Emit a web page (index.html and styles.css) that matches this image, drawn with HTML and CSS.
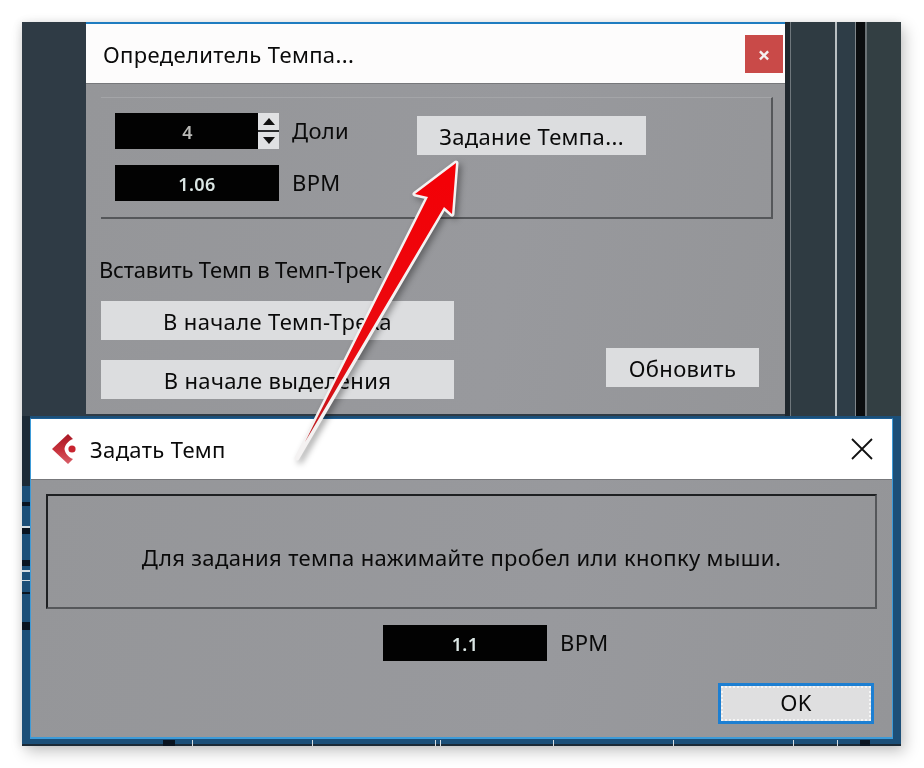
FILE: index.html
```html
<!DOCTYPE html>
<html lang="ru">
<head>
  <meta charset="UTF-8">
  <meta name="viewport" content="width=device-width, initial-scale=1.0">
  <title>Определитель Темпа</title>
  <link rel="stylesheet" href="styles.css">
</head>
<body>
  <div class="daw">
    <!-- Tap tempo window -->
    <section class="window window-tempo">
      <header class="titlebar">
        <span class="title">Определитель Темпа...</span>
        <button class="close-red" aria-label="Закрыть">×</button>
      </header>
      <div class="window-body">
        <div class="group">
          <div class="fields">
            <div class="field-row">
              <div class="display spin">
                <span class="value dim">4</span>
                <div class="spinner">
                  <span class="spin-btn"><i class="tri up"></i></span>
                  <span class="spin-btn"><i class="tri down"></i></span>
                </div>
              </div>
              <span class="label">Доли</span>
            </div>
            <div class="field-row">
              <div class="display"><span class="value">1.06</span></div>
              <span class="label">BPM</span>
            </div>
          </div>
          <button class="btn btn-tap">Задание Темпа...</button>
        </div>
        <p class="insert-label">Вставить Темп в Темп-Трек</p>
        <div class="insert-row">
          <div class="insert-buttons">
            <button class="btn btn-wide">В начале Темп-Трека</button>
            <button class="btn btn-wide">В начале выделения</button>
          </div>
          <button class="btn btn-refresh">Обновить</button>
        </div>
      </div>
    </section>

    <!-- Set tempo window -->
    <section class="window window-set">
      <header class="titlebar titlebar-set">
        <svg class="app-logo" viewBox="0 0 26 32" width="26" height="32">
          <defs>
            <linearGradient id="logoFill" x1="0" y1="0" x2="0" y2="1">
              <stop offset="0" stop-color="#a81825"/>
              <stop offset="0.55" stop-color="#c8323c"/>
              <stop offset="1" stop-color="#d8606a"/>
            </linearGradient>
          </defs>
          <path fill="url(#logoFill)" d="M17 1 L1 16 L17 31 L22 26 C17 24 14 20 13.5 16 C14 12 17 8 22 6 Z"/>
          <circle class="logo-dot" cx="21" cy="16" r="3.6"/>
        </svg>
        <span class="title title-set">Задать Темп</span>
        <svg class="close-x" viewBox="0 0 22 22" width="22" height="22">
          <path d="M1 1 L21 21 M21 1 L1 21"/>
        </svg>
      </header>
      <div class="window-body body-set">
        <div class="message">Для задания темпа нажимайте пробел или кнопку мыши.</div>
        <div class="field-row field-center">
          <div class="display"><span class="value">1.1</span></div>
          <span class="label">BPM</span>
        </div>
        <div class="actions">
          <button class="btn btn-ok"><span class="focus">OK</span></button>
        </div>
      </div>
    </section>
  </div>

  <!-- Callout arrow over both windows -->
  <svg class="arrow" viewBox="0 0 924 768" width="924" height="768">
    <defs>
      <linearGradient id="arrowFill" x1="0" y1="0" x2="0" y2="1">
        <stop offset="0" stop-color="#f40006"/>
        <stop offset="0.7" stop-color="#ea0a10"/>
        <stop offset="1" stop-color="#b81c20"/>
      </linearGradient>
    </defs>
    <polygon class="arrow-edge" points="456,163 415,194 428,197 297,458 444,207 452,214"/>
    <polygon fill="url(#arrowFill)" points="456,163 415,194 428,197 305,442 444,207 452,214"/>
  </svg>
</body>
</html>
```

FILE: styles.css
```css
/* Page and the dark DAW backdrop */
html, body {
  margin: 0;
  padding: 0;
  background: #fff;
}
body {
  position: relative;
  width: 924px;
  height: 768px;
  overflow: hidden;
  font-family: "Noto Sans", "Open Sans", sans-serif;
  letter-spacing: 0.35px;
  color: #0a0a0a;
  filter: blur(0.35px);
}
.daw {
  position: relative;
  width: 879px;
  height: 724px;
  margin: 22px 0 0 22px;
  background:
    linear-gradient(90deg,
      transparent 763px, #1f272d 763px, #1f272d 768px, #6f777c 768px, #6f777c 769px,
      #2f3b42 769px, #2f3b42 813px, #b9bfc2 813px, #b9bfc2 815px,
      #2e3d47 815px, #2e3d47 833px, #7f868a 833px, #7f868a 834px,
      #0b0d0f 834px, #0b0d0f 843px, #6b7276 843px, #6b7276 845px,
      #333f43 845px) top / 100% 400px no-repeat,
    #2f3b45;
  box-shadow: 4px 6px 14px rgba(0, 0, 0, 0.22), -2px 0 8px rgba(0, 0, 0, 0.08);
}
/* Blue strip behind the lower window, with the track ticks showing through */
.daw::after {
  content: "";
  display: block;
  position: absolute;
  left: 0;
  right: 0;
  top: 394px;
  bottom: 0;
  background:
    linear-gradient(180deg,
      #1c2a36 0, #1c2a36 70px, transparent 70px,
      transparent 86px, #0a1420 86px, #0a1420 90px, transparent 90px,
      transparent 110px, #d5dde2 110px, #d5dde2 112px, #0a1420 112px, #0a1420 118px, transparent 118px,
      transparent 144px, #0a1420 144px, #0a1420 150px, transparent 150px,
      transparent 154px, #d5dde2 154px, #d5dde2 156px, transparent 156px,
      transparent 164px, #d5dde2 164px, #d5dde2 165px, transparent 165px,
      transparent 176px, #0a1420 176px, #0a1420 178px, transparent 178px,
      transparent 206px, #0a1420 206px, #0a1420 214px, transparent 214px) left top / 8px 100% no-repeat,
    linear-gradient(90deg,
      transparent 141px, #0a1420 141px, #0a1420 153px, transparent 153px,
      transparent 170px, #d5dde2 170px, #d5dde2 171px, transparent 171px,
      transparent 290px, #d5dde2 290px, #d5dde2 291px, transparent 291px,
      transparent 413px, #d5dde2 413px, #d5dde2 414px, transparent 414px,
      transparent 418px, #d5dde2 418px, #d5dde2 419px, transparent 419px,
      transparent 531px, #d5dde2 531px, #d5dde2 532px, transparent 532px,
      transparent 651px, #d5dde2 651px, #d5dde2 652px, transparent 652px,
      transparent 771px, #d5dde2 771px, #d5dde2 772px, transparent 772px,
      transparent 815px, #d5dde2 815px, #d5dde2 816px, transparent 816px,
      transparent 838px, #0a1420 838px, #0a1420 848px, transparent 848px) left bottom / 100% 6px no-repeat,
    linear-gradient(#1c2a36, #1c2a36) left bottom / 100% 2px no-repeat,
    #1c4f78;
}

/* Windows sit on the backdrop like on a desktop */
.window {
  position: absolute;
  z-index: 1;
  display: flex;
  flex-direction: column;
}
.window-tempo {
  left: 64px;
  top: 0;
  width: 699px;
  height: 392px;
  border-top: 2px solid #1f7cc0;
  box-sizing: border-box;
}
.window-set {
  left: 8px;
  top: 396px;
  width: 863px;
  height: 321px;
  border: 1px solid #3d9bd8;
  border-top-color: #1c5f96;
  border-bottom-width: 2px;
  box-sizing: border-box;
}
.titlebar {
  flex: none;
  display: flex;
  align-items: center;
  justify-content: space-between;
  height: 60px;
  padding: 0 2px 0 17px;
  background: #fdfcfc;
  border-bottom: 1px solid #77787b;
  box-sizing: border-box;
}
.titlebar-set {
  height: 61px;
  padding: 0 19px 0 20px;
  justify-content: flex-start;
  background: #fff;
}
.title {
  font-size: 22px;
  line-height: 30px;
}
.title-set {
  margin-left: 13px;
}
.close-red {
  width: 38px;
  height: 38px;
  margin-top: 1px;
  padding: 0;
  border: 0;
  background: #c94a48;
  color: #f4f0f0;
  font: bold 22px/36px "Noto Sans", sans-serif;
}
.app-logo {
  flex: none;
}
.logo-dot {
  fill: #c8242f;
}
.close-x {
  margin-left: auto;
}
.close-x path {
  fill: none;
  stroke: #111;
  stroke-width: 1.8;
}
.window-body {
  flex: 1;
  padding: 13px 12px 0 15px;
  background: linear-gradient(100deg, #959699, #98999d 60%, #949598);
}

/* Top group box */
.group {
  display: flex;
  align-items: flex-start;
  box-sizing: border-box;
  height: 122px;
  padding: 15px 0 0 14px;
  border-top: 1px solid #a4a5a8;
  border-right: 2px solid #55575a;
  border-bottom: 2px solid #55575a;
}
.fields {
  display: flex;
  flex-direction: column;
  gap: 16px;
  width: 302px;
}
.field-row {
  display: flex;
  align-items: center;
  gap: 13px;
}
.label {
  font-size: 22px;
  line-height: 30px;
  margin-top: -2px;
}
.display {
  display: flex;
  width: 164px;
  height: 36px;
  background: #020202;
}
.value {
  flex: 1;
  text-align: center;
  font-size: 18px;
  font-weight: 600;
  line-height: 38px;
  color: #dbe6e4;
}
.value.dim {
  color: #b9b9b6;
  padding-left: 2px;
}
.spinner {
  flex: none;
  display: flex;
  flex-direction: column;
  justify-content: space-between;
  width: 21px;
  background: #2a2b2d;
}
.spin-btn {
  display: flex;
  align-items: center;
  justify-content: center;
  height: 17px;
  background: #e0e1e3;
}
.tri {
  display: block;
  width: 0;
  height: 0;
  border-left: 6px solid transparent;
  border-right: 6px solid transparent;
}
.tri.up {
  border-bottom: 7px solid #111;
}
.tri.down {
  border-top: 7px solid #111;
}

/* Buttons */
.btn {
  box-sizing: border-box;
  padding: 0;
  border: 0;
  background: #dcdddf;
  color: #0a0a0a;
  font-family: "Noto Sans", "Open Sans", sans-serif;
  font-size: 22px;
  letter-spacing: 0.35px;
}
.btn-tap {
  width: 229px;
  height: 39px;
  margin-top: 3px;
}
.insert-label {
  margin: 35px 0 0 -2px;
  font-size: 22px;
  line-height: 30px;
  letter-spacing: -0.2px;
}
.insert-row {
  display: flex;
  align-items: flex-start;
  justify-content: space-between;
  margin-top: 17px;
  padding-right: 14px;
}
.insert-buttons {
  display: flex;
  flex-direction: column;
  gap: 20px;
}
.btn-wide {
  width: 353px;
  height: 39px;
}
.btn-refresh {
  width: 153px;
  height: 39px;
  margin-top: 47px;
}

/* Lower window */
.body-set {
  display: flex;
  flex-direction: column;
  padding: 14px 15px 0;
}
.message {
  flex: none;
  display: flex;
  align-items: center;
  justify-content: center;
  box-sizing: border-box;
  height: 115px;
  padding-top: 10px;
  border: 2px solid #1e2022;
  border-right-color: #55575a;
  border-bottom-color: #55575a;
  font-size: 22px;
}
.field-center {
  justify-content: flex-start;
  margin: 16px 0 0 337px;
}
.actions {
  display: flex;
  justify-content: flex-end;
  margin-top: 22px;
  padding-right: 3px;
}
.btn-ok {
  width: 156px;
  height: 41px;
  border: 3px solid #1d7fd2;
}
.focus {
  display: block;
  height: 100%;
  box-sizing: border-box;
  border: 2px dotted #f5f5f5;
  background: #dfdfe0;
  line-height: 29px;
}

/* Callout arrow */
.arrow {
  position: absolute;
  left: 0;
  top: 0;
  z-index: 2;
  filter: drop-shadow(3px 3px 3px rgba(0, 0, 0, 0.35));
}
.arrow-edge {
  fill: #f4f2f2;
  stroke: #f4f2f2;
  stroke-width: 5;
  stroke-linejoin: round;
}
```
